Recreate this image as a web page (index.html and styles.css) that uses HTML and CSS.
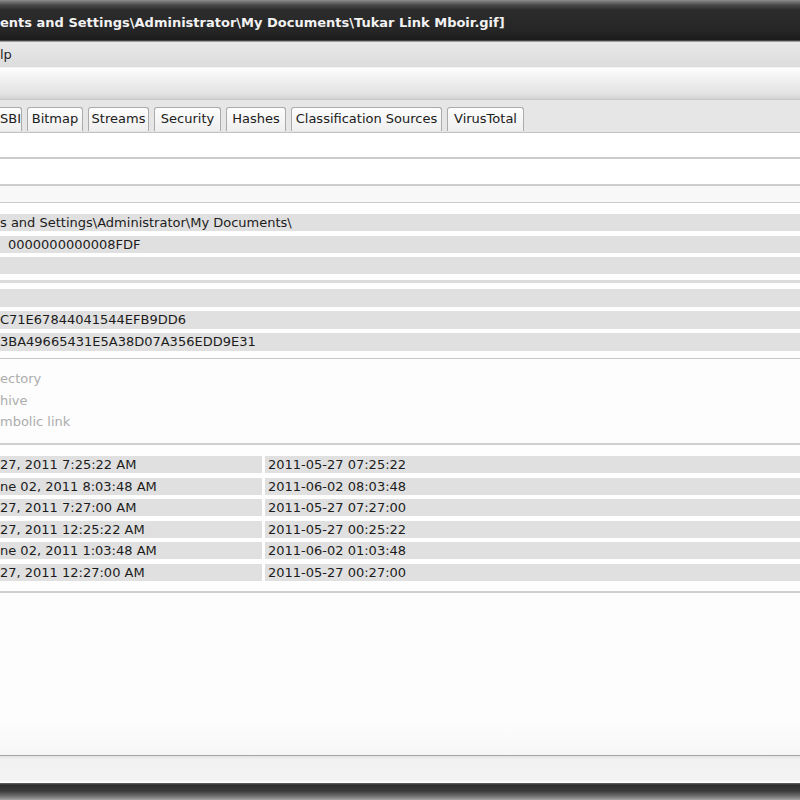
FILE: index.html
```html
<!DOCTYPE html>
<html>
<head>
<meta charset="utf-8">
<link rel="stylesheet" href="styles.css">
</head>
<body>
<div class="window">
  <div class="titlebar"><span class="title">ents and Settings\Administrator\My Documents\Tukar Link Mboir.gif]</span></div>
  <div class="menubar"><span class="menu-item">lp</span></div>
  <div class="toolbar"></div>
  <div class="tabstrip">
    <span class="tab tab-first">SBI</span>
    <span class="tab tab-bitmap">Bitmap</span>
    <span class="tab tab-streams">Streams</span>
    <span class="tab tab-security">Security</span>
    <span class="tab tab-hashes">Hashes</span>
    <span class="tab tab-class">Classification Sources</span>
    <span class="tab tab-vt">VirusTotal</span>
  </div>
  <div class="content">
    <div class="field field-a"></div>
    <div class="field field-b"></div>
    <div class="field field-c"></div>
    <div class="group group-path">
      <div class="row"><span class="cell">s and Settings\Administrator\My Documents\</span></div>
      <div class="row"><span class="cell indent">0000000000008FDF</span></div>
      <div class="row"><span class="cell"></span></div>
    </div>
    <div class="group group-hash">
      <div class="row"><span class="cell"></span></div>
      <div class="row"><span class="cell">C71E67844041544EFB9DD6</span></div>
      <div class="row"><span class="cell">3BA49665431E5A38D07A356EDD9E31</span></div>
    </div>
    <div class="attrs">
      <div class="attr">ectory</div>
      <div class="attr">hive</div>
      <div class="attr">mbolic link</div>
    </div>
    <div class="group group-dates">
      <div class="row row-2"><span class="cell">27, 2011 7:25:22 AM</span><span class="cell">2011-05-27 07:25:22</span></div>
      <div class="row row-2"><span class="cell">ne 02, 2011 8:03:48 AM</span><span class="cell">2011-06-02 08:03:48</span></div>
      <div class="row row-2"><span class="cell">27, 2011 7:27:00 AM</span><span class="cell">2011-05-27 07:27:00</span></div>
      <div class="row row-2"><span class="cell">27, 2011 12:25:22 AM</span><span class="cell">2011-05-27 00:25:22</span></div>
      <div class="row row-2"><span class="cell">ne 02, 2011 1:03:48 AM</span><span class="cell">2011-06-02 01:03:48</span></div>
      <div class="row row-2"><span class="cell">27, 2011 12:27:00 AM</span><span class="cell">2011-05-27 00:27:00</span></div>
    </div>
    <div class="filler"></div>
  </div>
  <div class="statusbar"></div>
  <div class="frame-bottom"></div>
</div>
</body>
</html>
```

FILE: styles.css
```css
* { box-sizing: border-box; }
html, body { margin: 0; padding: 0; background: #fdfdfd; }
body {
  font-family: "DejaVu Sans", "Liberation Sans", sans-serif;
  font-size: 13px;
  color: #1a1a1a;
}
.window {
  width: 800px;
  height: 800px;
  display: flex;
  flex-direction: column;
  overflow: hidden;
}
.titlebar {
  height: 42px;
  flex: none;
  background: linear-gradient(#8c8c8c 0, #4a4a4a 5px, #2c2c2c 10px, #262626 30px, #1c1c1c 40px, #6a6a6a 41px, #cfcfcf 42px);
  display: flex;
  align-items: center;
  white-space: nowrap;
  overflow: hidden;
}
.title {
  color: #f2f2f2;
  font-weight: bold;
  font-size: 13px;
  margin-top: 2px;
}
.menubar {
  height: 26px;
  flex: none;
  background: linear-gradient(#e9e9e9, #dcdcdc);
  display: flex;
  align-items: center;
  border-bottom: 1px solid #f2f2f2;
}
.menu-item {
  color: #1e1e1e;
}
.toolbar {
  height: 32px;
  flex: none;
  background: linear-gradient(#fefefe 0, #f4f4f4 8px, #e2e2e2 26px, #d6d6d6 30px, #c4c4c4 32px);
}
.tabstrip {
  height: 33px;
  flex: none;
  background: #e6e6e6;
  display: flex;
  align-items: flex-end;
  gap: 5px;
  padding-bottom: 1px;
  border-bottom: 1px solid #c2c2c2;
  white-space: nowrap;
}
.tab {
  height: 24px;
  line-height: 22px;
  padding: 0;
  text-align: center;
  border: 1px solid #ababab;
  border-bottom: none;
  border-radius: 3px 3px 0 0;
  background: linear-gradient(#fdfdfd, #efefef);
  color: #202020;
  font-size: 13px;
  flex: none;
  overflow: hidden;
}
.tab-first { width: 22px; border-left: none; border-radius: 0 3px 0 0; text-align: left; }
.tab-bitmap { width: 56px; }
.tab-streams { width: 61px; }
.tab-security { width: 67px; }
.tab-hashes { width: 60px; }
.tab-class { width: 151px; }
.tab-vt { width: 77px; }
.content {
  flex: 1;
  display: flex;
  flex-direction: column;
  background: #fefefe;
}
.field-a { height: 26px; border-bottom: 2px solid #cbcbcb; background: #fff; }
.field-b { height: 27px; border-bottom: 2px solid #cdcdcd; background: #fff; }
.field-c { height: 17px; border-bottom: 1px solid #c9c9c9; background: #f8f8f8; }
.group {
  display: flex;
  flex-direction: column;
}
.group-path { padding: 11px 0 6px; gap: 4.5px; border-bottom: 3px solid #dcdcdc; }
.group-hash { padding: 6px 0 7px; gap: 4px; border-bottom: 1px solid #c6c6c6; }
.group-hash .row { height: 18px; }
.group-dates { padding: 11px 0 10px; gap: 4.6px; border-bottom: 2px solid #cfcfcf; }
.row {
  height: 17px;
  display: grid;
  grid-template-columns: 1fr;
  white-space: nowrap;
  overflow: hidden;
}
.row-2 { grid-template-columns: 262px 1fr; gap: 3px; }
.cell {
  background: #e0e0e0;
  line-height: 17px;
  overflow: hidden;
  color: #1c1c1c;
}
.row-2 .cell + .cell { padding-left: 3px; }
.indent { padding-left: 8px; }
.attrs {
  height: 86px;
  padding-top: 9px;
  border-bottom: 2px solid #d0d0d0;
  background: #fdfdfd;
}
.attr {
  line-height: 21.5px;
  color: #acacac;
}
.filler {
  flex: 1;
  background: linear-gradient(#fdfdfd 0, #fdfdfd 80%, #f6f6f6 100%);
}
.statusbar {
  height: 28px;
  flex: none;
  border-top: 1px solid #a6a6a6;
  background: linear-gradient(#e2e2e2 0, #f1f1f1 3px, #f3f3f3 24px, #ffffff 27px);
}
.frame-bottom {
  height: 17px;
  flex: none;
  background: linear-gradient(#6a6a6a 0, #2e2e2e 2px, #3c3c3c 8px, #6e6e6e 13px, #a4a4a4 17px);
}
```
